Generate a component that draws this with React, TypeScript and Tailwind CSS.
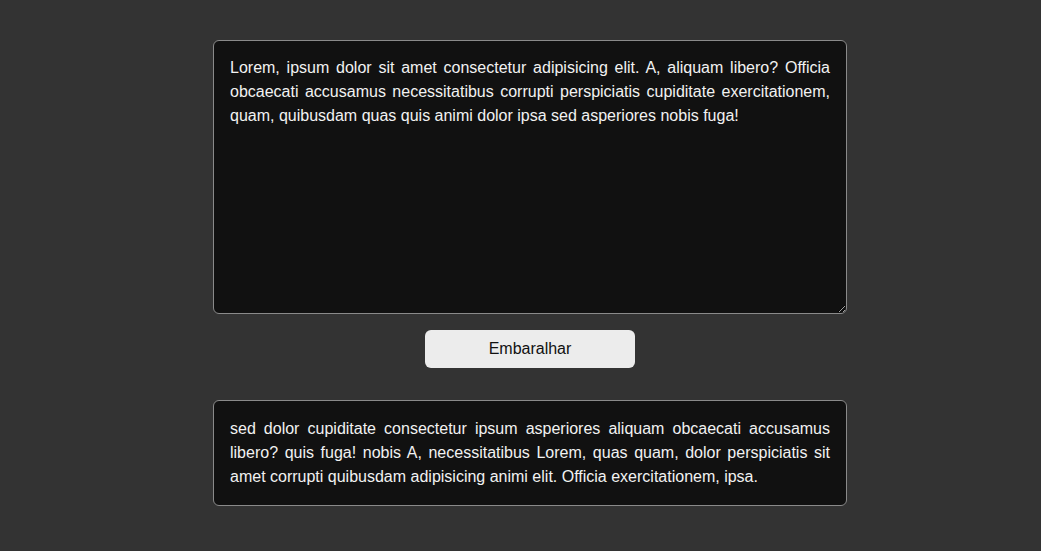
import React, { useState } from "react";

const initial =
  "Lorem, ipsum dolor sit amet consectetur adipisicing elit. A, aliquam libero? Officia obcaecati accusamus necessitatibus corrupti perspiciatis cupiditate exercitationem, quam, quibusdam quas quis animi dolor ipsa sed asperiores nobis fuga!";

const shuffled =
  "sed dolor cupiditate consectetur ipsum asperiores aliquam obcaecati accusamus libero? quis fuga! nobis A, necessitatibus Lorem, quas quam, dolor perspiciatis sit amet corrupti quibusdam adipisicing animi elit. Officia exercitationem, ipsa.";

export default function App() {
  const [text, setText] = useState(initial);
  return (
    <div
      className="min-h-[551px] bg-[#333333] pt-[40px] pl-[19px]"
      style={{ fontFamily: '"Liberation Sans", Arial, sans-serif' }}
    >
      <div className="mx-auto flex w-[634px] flex-col items-center">
        <textarea
          value={text}
          onChange={(e) => setText(e.target.value)}
          className="box-border h-[274px] w-full rounded-[6px] border border-[#8a8a8a] bg-[#111111] px-[16px] py-[15px] text-justify text-[16px] leading-[24px] text-[#f2f2f2] outline-none"
          style={{ fontFamily: '"Liberation Sans", Arial, sans-serif' }}
        />
        <button className="mt-[16px] h-[38px] w-[210px] rounded-[6px] bg-[#ececec] text-[16px] text-[#111111]">
          Embaralhar
        </button>
        <div className="mt-[32px] box-border w-full rounded-[6px] border border-[#8a8a8a] bg-[#111111] px-[16px] py-[16px] text-justify text-[16px] leading-[24px] text-[#f2f2f2]">
          {shuffled}
        </div>
      </div>
    </div>
  );
}
